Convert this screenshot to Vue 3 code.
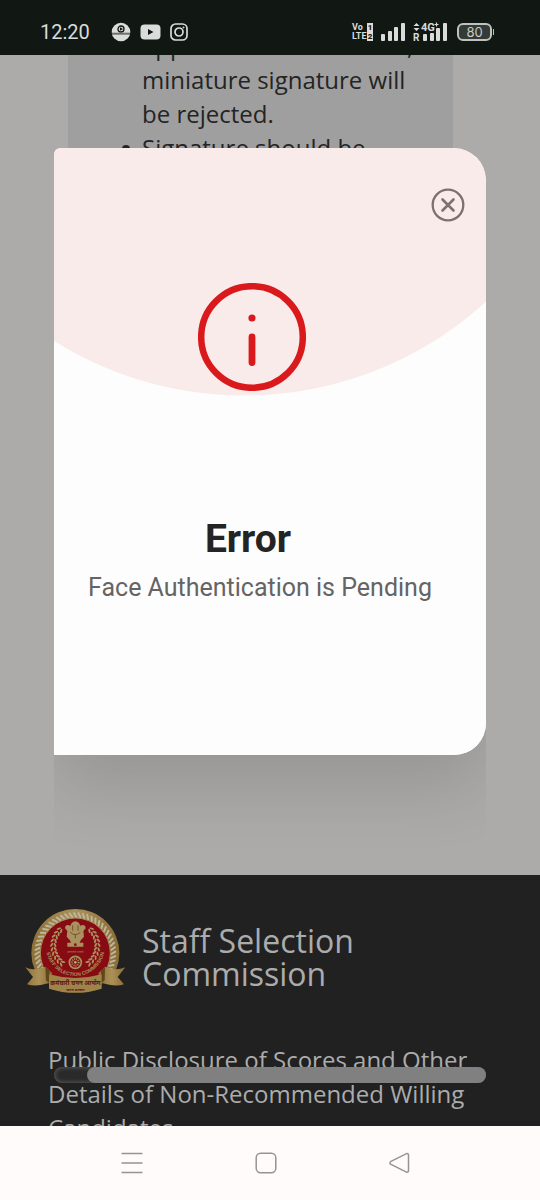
<script setup>
import { ref } from 'vue'

const open = ref(true)
const beads = Array.from({ length: 56 }, (_, i) => (i * 360) / 56)
const leaves = Array.from({ length: 10 }, (_, i) => 44 + i * 11)
const wreath = [...leaves, ...leaves.map((a) => -a)]
</script>

<template>
  <div class="screen">
    <header class="status">
      <time class="clock">12:20</time>
      <div class="notices">
        <svg width="20" height="20" viewBox="0 0 20 20" aria-label="App notification">
          <circle cx="10" cy="10" r="9.300" fill="#d9dcda" />
          <circle cx="10" cy="7" r="3" fill="none" stroke="#111713" stroke-width="1.300" />
          <path d="M9 5.200 12 7 9 8.800z" fill="#111713" />
          <path d="M1 11.700h18" stroke="#6b706d" stroke-width="2" />
        </svg>
        <svg width="21" height="16" viewBox="0 0 21 16" aria-label="Video">
          <rect x="0.500" y="0.500" width="20" height="15" rx="4" fill="#d9dcda" />
          <path d="M8 5 13.500 8 8 11z" fill="#111713" />
        </svg>
        <svg width="18" height="18" viewBox="0 0 18 18" fill="none" stroke="#d9dcda" stroke-width="1.700" aria-label="Photos">
          <rect x="1" y="1" width="16" height="16" rx="4.500" />
          <circle cx="9" cy="9" r="4" />
          <circle cx="13.500" cy="4.500" r="0.600" fill="#d9dcda" stroke-width="0.800" />
        </svg>
      </div>
      <div class="signals">
        <div class="volte">
          <div><span>Vo</span><b>1</b></div>
          <div><span>LTE</span><b>2</b></div>
        </div>
        <svg width="24" height="18" viewBox="0 0 24 18" fill="#d9dcda" aria-label="Signal one">
          <rect x="0" y="11" width="4" height="7" rx="1" />
          <rect x="7" y="8" width="4" height="10" rx="1" />
          <rect x="13" y="4" width="4" height="14" rx="1" />
          <rect x="20" y="0" width="4" height="18" rx="1" />
        </svg>
        <svg width="34" height="20" viewBox="0 0 34 20" fill="#d9dcda" aria-label="Signal two">
          <path d="M0.500 4 3.500 1 6.500 4zM0.500 6 6.500 6 3.500 9z" />
          <text x="0" y="19" class="tiny">R</text>
          <text x="8" y="9" class="net">4G</text>
          <path d="M23.500 0.500v4M21.500 2.500h4" stroke="#d9dcda" stroke-width="1.200" />
          <rect x="10" y="12" width="4" height="7" rx="1" />
          <rect x="17" y="11" width="4" height="8" rx="1" />
          <rect x="23" y="6" width="4" height="13" rx="1" />
          <rect x="30" y="1" width="4" height="18" rx="1" />
        </svg>
        <div class="battery"><span>80</span></div>
      </div>
    </header>

    <main class="page">
      <section class="instructions">
        <div class="card">
          <ul>
            <li>appear small or unclear,<br />miniature signature will<br />be rejected.</li>
            <li>Signature should be</li>
          </ul>
        </div>
      </section>

      <footer class="footer">
        <div class="brand">
          <svg width="110" height="90" viewBox="30 36 330 270" role="img" aria-label="Commission emblem">
            <defs>
              <linearGradient id="gold" x1="0" x2="1">
                <stop offset="0" stop-color="#8e7139" />
                <stop offset="0.500" stop-color="#ab9158" />
                <stop offset="1" stop-color="#8a6b33" />
              </linearGradient>
              <clipPath id="seal"><path d="M30 30h330v235H30z" /></clipPath>
              <path id="ring-text" d="M93 155A88 88 0 0 0 269 155" />
            </defs>
            <g clip-path="url(#seal)">
              <circle cx="181" cy="174" r="132" fill="url(#gold)" />
              <g fill="none" stroke="#bcb59d" stroke-width="6" stroke-linecap="round">
                <path v-for="a in beads" :key="a" d="M177 54 184 66" :transform="`rotate(${a} 181 174)`" />
              </g>
              <circle cx="181" cy="174" r="105" fill="#870b13" stroke="#a68d57" stroke-width="3" />
            </g>
            <g fill="#a9925f">
              <g v-for="a in wreath" :key="a" :transform="`rotate(${a} 181 152)`">
                <ellipse cx="181" cy="81" rx="7" ry="3" :transform="`rotate(${a > 0 ? -30 : 30} 181 81)`" />
                <ellipse cx="181" cy="91" rx="7" ry="3" :transform="`rotate(${a > 0 ? 30 : -30} 181 91)`" />
              </g>
              <path d="M170 84Q181 73 192 84L196 92Q211 86 212 100L205 108 207 125 198 135 164 135 155 125 157 108 150 100Q151 86 166 92z" />
              <path d="M164 134h34l-4 9h-26zM157 143h48v12h-48z" />
            </g>
            <path d="M173 91v16M189 91v16M166 112q15 14 30 0M181 118v12" fill="none" stroke="#74532c" stroke-width="3" />
            <circle cx="181" cy="149" r="4" fill="#870b13" />
            <text x="181" y="173" text-anchor="middle" class="motto">सत्यमेव जयते</text>
            <circle cx="181" cy="202" r="18" fill="#870b13" stroke="#a9925f" stroke-width="5" />
            <circle cx="181" cy="202" r="10" fill="none" stroke="#a9925f" stroke-width="6" stroke-dasharray="3 3" />
            <circle cx="181" cy="202" r="4" fill="#c3ad7e" />
            <text class="ring"><textPath href="#ring-text" startOffset="50%" text-anchor="middle">STAFF SELECTION COMMISSION</textPath></text>
            <path d="M31 217Q56 230 91 215L112 235 104 262Q66 278 36 268L54 246z" fill="url(#gold)" />
            <path d="M331 217Q301 230 270 215L250 235 258 262Q300 278 327 268L308 246z" fill="url(#gold)" />
            <path d="M91 215 104 226 104 266 93 256zM270 215 258 226 258 266 269 256z" fill="#604719" />
            <path d="M102 238Q181 260 260 238V281Q181 306 102 281z" fill="#9e8449" />
            <text x="181" y="270" text-anchor="middle" class="ribbon">कर्मचारी चयन आयोग</text>
            <text x="181" y="287" text-anchor="middle" class="ribbon-small">भारत सरकार</text>
          </svg>
          <h2>Staff Selection<br />Commission</h2>
        </div>
        <a class="notice" href="#">Public Disclosure of Scores and Other<br />Details of Non-Recommended Willing<br />Candidates</a>
      </footer>

      <div v-if="open" class="scroller">
        <section class="dialog" role="alertdialog" aria-labelledby="dialog-title" aria-describedby="dialog-text">
          <div class="dome"></div>
          <button class="close" type="button" aria-label="Close" @click="open = false">
            <svg width="34" height="34" viewBox="0 0 34 34" fill="none" stroke="#7d7070" stroke-width="2.300" stroke-linecap="round">
              <circle cx="17" cy="17" r="15.300" />
              <path d="M11.500 11.500 22.500 22.500M22.500 11.500 11.500 22.500" stroke-width="2.600" />
            </svg>
          </button>
          <svg class="info" width="108" height="108" viewBox="0 0 108 108" aria-hidden="true">
            <circle cx="54" cy="54" r="50.800" fill="none" stroke="#d9191c" stroke-width="6.500" />
            <circle cx="54" cy="35" r="3.600" fill="#d9191c" />
            <path d="M54 54v25.500" stroke="#d9191c" stroke-width="6.800" stroke-linecap="round" />
          </svg>
          <h1 id="dialog-title">Error</h1>
          <p id="dialog-text">Face Authentication is Pending</p>
        </section>
        <div class="track"><div class="thumb"></div></div>
      </div>
    </main>

    <nav class="system">
      <button type="button" aria-label="Recent apps">
        <svg width="22" height="22" viewBox="0 0 22 22" fill="none" stroke="#979392" stroke-width="1.500">
          <path d="M0.500 1.500h21M0.500 11h21M0.500 20.500h21" />
        </svg>
      </button>
      <button type="button" aria-label="Home">
        <svg width="22" height="22" viewBox="0 0 22 22" fill="none" stroke="#979392" stroke-width="1.500">
          <rect x="1.200" y="1.200" width="19.600" height="19.600" rx="4.500" />
        </svg>
      </button>
      <button type="button" aria-label="Back">
        <svg width="22" height="22" viewBox="0 0 22 22" fill="none" stroke="#979392" stroke-width="1.500" stroke-linejoin="round">
          <path d="M17.500 1.600 1.500 9.600Q0.500 11 1.500 12.200L17.500 20.200Q19.500 20.500 19.500 18.500V3.300Q19.500 1.200 17.500 1.600z" />
        </svg>
      </button>
    </nav>
  </div>
</template>

<style>
body {
  margin: 0;
}
</style>

<style scoped>
.screen {
  display: flex;
  flex-direction: column;
  height: 100vh;
  overflow: hidden;
  font-family: "Open Sans", "Noto Sans", sans-serif;
}

.status {
  flex: none;
  display: flex;
  align-items: center;
  height: 55px;
  padding: 8px 48px 0 40px;
  box-sizing: border-box;
  background: #111713;
  color: #d9dcda;
}

.clock {
  font: 20px/24px Roboto, sans-serif;
}

.notices {
  display: flex;
  align-items: center;
  gap: 9px;
  margin-left: 21px;
}

.signals {
  display: flex;
  align-items: center;
  gap: 8px;
  margin-left: auto;
}

.volte {
  width: 21px;
  font: bold 9px/9px Roboto, sans-serif;
}

.volte div {
  display: flex;
  justify-content: space-between;
}

.volte b {
  width: 6px;
  background: #d9dcda;
  color: #111713;
  font-size: 8px;
  text-align: center;
}

.tiny {
  font: bold 10px Roboto, sans-serif;
}

.net {
  font: bold 11px Roboto, sans-serif;
}

.battery {
  position: relative;
  width: 35px;
  height: 18px;
  margin-left: 2px;
  box-sizing: border-box;
  border: 2px solid #bfc3c0;
  border-radius: 6px;
  background: #343a36;
  color: #c8cbc9;
  font: 13px/14px Inter, sans-serif;
  text-align: center;
}

.battery::after {
  content: "";
  position: absolute;
  top: 4px;
  right: -4px;
  width: 1px;
  height: 6px;
  background: #bfc3c0;
}

.page {
  position: relative;
  flex: 1;
  min-height: 0;
  overflow: hidden;
  background: #acaba9;
}

.instructions {
  height: 820px;
  padding: 0 87px 0 68px;
  box-sizing: border-box;
}

.card {
  height: 600px;
  overflow: hidden;
  background: #9f9f9f;
  color: #242424;
}

.card ul {
  margin: -26px 0 0;
  padding: 0 0 0 74px;
  font-size: 24px;
  line-height: 34px;
  list-style: none;
  white-space: nowrap;
}

.card li {
  position: relative;
}

.card li::before {
  content: "";
  position: absolute;
  top: 14px;
  left: -20px;
  width: 8px;
  height: 8px;
  border-radius: 50%;
  background: #242424;
}

.footer {
  padding: 32px 25px 0;
  background: #212121;
  color: #acacac;
}

.brand {
  display: flex;
  align-items: center;
  gap: 7px;
}

.brand h2 {
  margin: 10px 0 0;
  font-size: 32px;
  font-weight: 400;
  line-height: 33px;
}

.motto {
  fill: #a88b58;
  font: 10px "Noto Sans", sans-serif;
}

.ring {
  fill: #a9925f;
  font: bold 15px "Liberation Sans", sans-serif;
}

.ribbon {
  fill: #5d1015;
  font: bold 18px "Noto Sans", sans-serif;
}

.ribbon-small {
  fill: #5d1015;
  font: bold 11px "Noto Sans", sans-serif;
}

.notice {
  display: block;
  margin: 46px 0 0 23px;
  color: inherit;
  font-size: 24px;
  line-height: 34px;
  text-decoration: none;
  white-space: nowrap;
}

.scroller {
  position: absolute;
  top: 93px;
  right: 10%;
  bottom: 43px;
  left: 10%;
  display: flex;
  flex-direction: column;
  justify-content: space-between;
  overflow: hidden;
}

.dialog {
  position: relative;
  display: flex;
  flex-direction: column;
  align-items: center;
  padding: 40px 21px 151px;
  border-radius: 6px 32px 32px 0;
  background: #fdfdfd;
  box-shadow: 0 30px 70px rgba(0, 0, 0, 0.13);
  clip-path: inset(0 0 -110px 0 round 6px 32px 0 0);
}

.dome {
  position: absolute;
  inset: 0;
  border-radius: inherit;
  background: radial-gradient(circle 359px at 44% -111px, #f9ebea 358px, #fdfdfd 359px);
}

.close {
  position: relative;
  display: flex;
  align-self: flex-end;
  padding: 0;
  border: 0;
  background: none;
}

.info {
  position: relative;
  margin: 61px 36px 0 0;
}

.dialog h1 {
  position: relative;
  margin: 125px 44px 0 0;
  color: #242424;
  font: bold 39px/46px Roboto, sans-serif;
}

.dialog p {
  position: relative;
  margin: 10px 20px 0 0;
  color: #646464;
  font: 25px/32px Roboto, sans-serif;
  white-space: nowrap;
}

.track {
  flex: none;
  height: 16px;
  border-radius: 8px;
  background: #2a2a2a;
  box-shadow: inset 0 0 5px #686868;
}

.thumb {
  height: 100%;
  margin-left: 33px;
  border-radius: 8px;
  background: #808080;
}

.system {
  flex: none;
  display: flex;
  align-items: center;
  justify-content: center;
  gap: 90px;
  height: 74px;
  padding-right: 8px;
  box-sizing: border-box;
  background: #fffbfa;
}

.system button {
  display: flex;
  justify-content: center;
  width: 44px;
  padding: 11px 0;
  border: 0;
  background: none;
}
</style>
